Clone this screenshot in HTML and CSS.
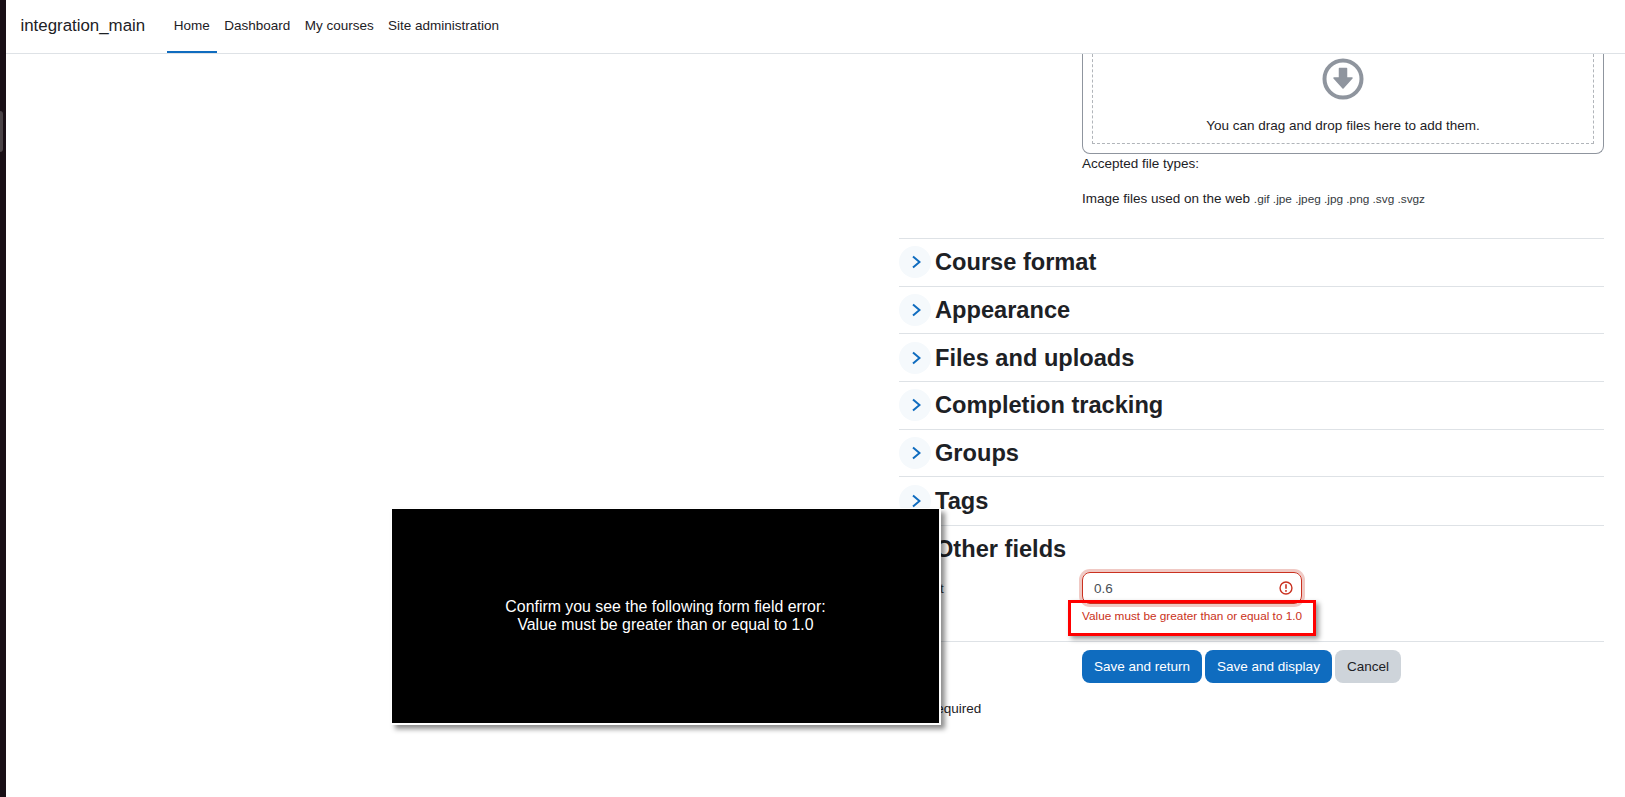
FILE: index.html
```html
<!DOCTYPE html>
<html lang="en">
<head>
<meta charset="utf-8">
<title>integration_main</title>
<link rel="stylesheet" href="styles.css">
</head>
<body>
<div class="app">
  <div class="strip"><span class="strip-handle"></span></div>
  <div class="page">
    <header class="navbar">
      <span class="brand">integration_main</span>
      <nav class="nav">
        <a class="nav-link active">Home</a>
        <a class="nav-link">Dashboard</a>
        <a class="nav-link">My courses</a>
        <a class="nav-link">Site administration</a>
      </nav>
    </header>
    <main class="main">
      <form class="form">
        <div class="field-row upload-row">
          <div class="label-col"></div>
          <div class="value-col">
            <div class="dropzone">
              <div class="dropzone-inner">
                <svg class="drop-icon" viewBox="0 0 42 42" width="42" height="42">
                  <circle cx="21" cy="21" r="18.5" fill="none" stroke="#8f959e" stroke-width="4"/>
                  <path d="M17.5 10.5h7v9.5h5.5L21 30l-9-10h5.500z" fill="#8f959e" stroke="#8f959e" stroke-width="1.500" stroke-linejoin="round"/>
                </svg>
                <p class="drop-text">You can drag and drop files here to add them.</p>
              </div>
            </div>
            <p class="accepted">Accepted file types:</p>
            <p class="types">Image files used on the web <small>.gif .jpe .jpeg .jpg .png .svg .svgz</small></p>
          </div>
        </div>

        <section class="section"><span class="toggle"><svg viewBox="0 0 12 16" width="12" height="16"><path d="M4 2.500 10.500 8 4 13.500" class="chev"/></svg></span><h3>Course format</h3></section>
        <section class="section"><span class="toggle"><svg viewBox="0 0 12 16" width="12" height="16"><path d="M4 2.500 10.500 8 4 13.500" class="chev"/></svg></span><h3>Appearance</h3></section>
        <section class="section"><span class="toggle"><svg viewBox="0 0 12 16" width="12" height="16"><path d="M4 2.500 10.500 8 4 13.500" class="chev"/></svg></span><h3>Files and uploads</h3></section>
        <section class="section"><span class="toggle"><svg viewBox="0 0 12 16" width="12" height="16"><path d="M4 2.500 10.500 8 4 13.500" class="chev"/></svg></span><h3>Completion tracking</h3></section>
        <section class="section"><span class="toggle"><svg viewBox="0 0 12 16" width="12" height="16"><path d="M4 2.500 10.500 8 4 13.500" class="chev"/></svg></span><h3>Groups</h3></section>
        <section class="section"><span class="toggle"><svg viewBox="0 0 12 16" width="12" height="16"><path d="M4 2.500 10.500 8 4 13.500" class="chev"/></svg></span><h3>Tags</h3></section>
        <section class="section open">
          <span class="toggle"><svg viewBox="0 0 16 12" width="16" height="12"><path d="M2.500 4 8 10.500 13.500 4" class="chev"/></svg></span><h3>Other fields</h3>
        </section>

        <div class="field-row cost-row">
          <div class="label-col"><label class="field-label">Cost</label></div>
          <div class="value-col">
            <div class="input-wrap">
              <span class="input-value">0.6</span>
              <svg class="err-icon" viewBox="0 0 16 16" width="14" height="14">
                <circle cx="8" cy="8" r="6.800" fill="none" stroke="#ca3120" stroke-width="1.600"/>
                <path d="M8 3.800v5" stroke="#ca3120" stroke-width="1.800" fill="none"/>
                <circle cx="8" cy="11.300" r="1.100" fill="#ca3120"/>
              </svg>
            </div>
            <p class="error-text">Value must be greater than or equal to 1.0</p>
          </div>
        </div>

        <div class="field-row actions-row">
          <div class="label-col"></div>
          <div class="value-col buttons">
            <button type="button" class="btn primary">Save and return</button>
            <button type="button" class="btn primary">Save and display</button>
            <button type="button" class="btn secondary">Cancel</button>
          </div>
        </div>
        <p class="required-note">Required</p>
      </form>
    </main>
  </div>
</div>
<div class="annotation"></div>
<div class="dialog"><p>Confirm you see the following form field error:<br>Value must be greater than or equal to 1.0</p></div>
</body>
</html>
```
FILE: styles.css
```css
* { box-sizing: border-box; }
html, body { margin: 0; height: 100%; overflow: hidden; background: #fff; }
body { font-family: "Liberation Sans", Arial, sans-serif; font-size: 13.500px; color: #1d2125; }
p, h3 { margin: 0; }

.app { display: flex; height: 797px; }
.strip { width: 6px; flex: none; background: #190f16; position: relative; }
.strip-handle { position: absolute; left: 0; top: 111px; width: 3px; height: 41px; background: #4a4347; border-radius: 0 4px 4px 0; }
.page { flex: 1; display: flex; flex-direction: column; min-width: 0; }

.navbar { height: 54px; flex: none; display: flex; align-items: stretch; border-bottom: 1px solid #dee2e6; padding-left: 14.500px; background: #fff; }
.brand { font-size: 16.880px; line-height: 51px; color: #1d2125; margin-right: 21.500px; }
.nav { display: flex; }
.nav-link { display: block; padding: 0 7.200px; line-height: 51px; font-size: 13.500px; color: #1d2125; height: 53px; }
.nav-link.active { border-bottom: 2px solid #0f6cbf; }

.main { flex: 1; min-height: 0; overflow: hidden; padding-left: 893px; padding-right: 20px; }
.form { width: 705px; }

.field-row { display: flex; }
.label-col { width: 183px; flex: none; }
.value-col { flex: 1; min-width: 0; }

.upload-row { height: 184px; }
.dropzone { height: 100px; border: 1px solid #8f959e; border-top: 0; border-radius: 0 0 8px 8px; padding: 0 9px 9px; }
.dropzone-inner { height: 90px; border: 1px dashed #b1b5ba; border-top: 0; display: flex; flex-direction: column; align-items: center; padding-top: 4px; }
.drop-text { margin-top: 16px; line-height: 20px; }
.accepted { line-height: 20px; }
.types { line-height: 20px; margin-top: 15px; }
.types small { font-size: 11.810px; color: #343a40; }

.section { height: 47.670px; border-top: 1px solid #dee2e6; display: flex; align-items: center; gap: 4px; }
.section.open { margin-top: 0.600px; }
.toggle { width: 32px; height: 32px; border-radius: 50%; background: #f5f9fc; display: flex; align-items: center; justify-content: center; flex: none; }
.chev { fill: none; stroke: #0f6cbf; stroke-width: 2; }
.section h3 { font-size: 23.625px; font-weight: 700; line-height: 30px; color: #1d2125; }

.cost-row { height: 71px; margin-top: -1px; border-bottom: 1px solid #dee2e6; }
.field-label { display: block; padding: 8px 0 0 17px; line-height: 20px; color: #343a40; }
.input-wrap { width: 220px; height: 32px; margin-top: 1px; border: 1px solid #ca3120; border-radius: 8px; box-shadow: 0 0 0 3px #f0c9c4; display: flex; align-items: center; justify-content: space-between; padding: 0 8px 0 11px; }
.input-value { color: #495057; }
.err-icon { flex: none; }
.error-text { font-size: 11.810px; line-height: 16px; color: #ca3120; margin-top: 4px; }

.actions-row { padding-top: 8px; }
.buttons { display: flex; gap: 3px; }
.btn { font: inherit; height: 33px; border: 0; border-radius: 8px; padding: 0 12px; }
.btn.primary { background: #0f6cbf; color: #fff; }
.btn.secondary { background: #ced4da; color: #1d2125; }
.required-note { margin-top: 16px; padding-left: 926.500px; margin-left: -899px; line-height: 20px; white-space: nowrap; }

.annotation { position: absolute; left: 1068px; top: 600px; width: 248px; height: 36px; border: 3px solid #f00; box-shadow: 3px 3px 5px rgba(0,0,0,.4); }
.dialog { position: absolute; left: 391px; top: 508px; width: 550px; height: 217px; background: #000; border: 2px solid #fff; border-left: 1px solid #fff; border-top: 1px solid #fff; box-shadow: 4px 4px 5px rgba(0,0,0,.45); display: flex; align-items: center; justify-content: center; text-align: center; color: #fff; font-size: 15.880px; line-height: 18.500px; }
```
